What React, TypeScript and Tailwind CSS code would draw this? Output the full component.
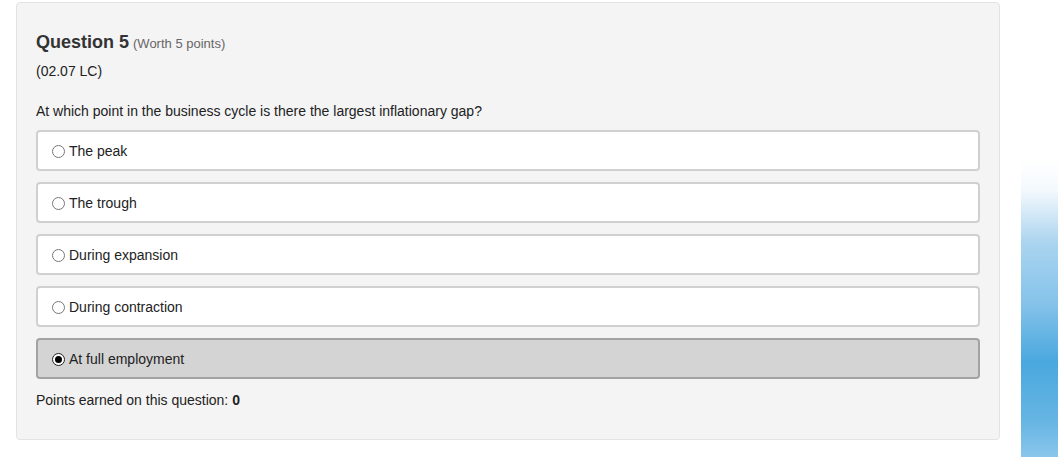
const options = [
  { label: 'The peak', selected: false },
  { label: 'The trough', selected: false },
  { label: 'During expansion', selected: false },
  { label: 'During contraction', selected: false },
  { label: 'At full employment', selected: true },
];

function Radio({ checked }: { checked: boolean }) {
  return checked ? (
    <span className="flex h-[13px] w-[13px] shrink-0 items-center justify-center rounded-full border border-[#222] bg-white">
      <span className="h-[7px] w-[7px] rounded-full bg-black" />
    </span>
  ) : (
    <span className="h-[13px] w-[13px] shrink-0 rounded-full border border-[#777] bg-white" />
  );
}

export default function App() {
  return (
    <div className="flex h-[457px] w-[1058px] bg-white font-['Liberation_Sans',Arial,sans-serif] text-[#222]">
      <div className="ml-4 mt-[2px] h-[438px] w-[984px] shrink-0 rounded border border-[#e3e3e3] bg-[#f4f4f4] px-[19px] pt-[26px]">
        <div className="flex items-baseline gap-1">
          <span className="text-[18px] font-bold text-[#333]">Question 5</span>
          <span className="text-[13px] text-[#666]">(Worth 5 points)</span>
        </div>
        <p className="mt-[5px] text-[14px]">(02.07 LC)</p>
        <p className="mt-[19px] text-[14px]">At which point in the business cycle is there the largest inflationary gap?</p>
        <div className="mt-[8px] flex flex-col gap-[11px]">
          {options.map((o) => (
            <div
              key={o.label}
              className={`flex h-[41px] items-center gap-[4px] rounded border-2 px-[14px] pt-[2px] text-[14px] ${
                o.selected ? 'border-[#a3a3a3] bg-[#d4d4d4]' : 'border-[#d0d0d0] bg-white'
              }`}
            >
              <Radio checked={o.selected} />
              <span>{o.label}</span>
            </div>
          ))}
        </div>
        <p className="mt-[11px] text-[14px]">
          Points earned on this question: <b>0</b>
        </p>
      </div>
      <div className="ml-[21px] mt-[160px] h-[297px] w-[37px] bg-[linear-gradient(to_bottom,#ffffff_0%,#f4f9fd_10%,#aad4ef_28%,#86c3ea_48%,#4aa8de_68%,#66b5e3_88%,#8ac6ec_100%)]" />
    </div>
  );
}
